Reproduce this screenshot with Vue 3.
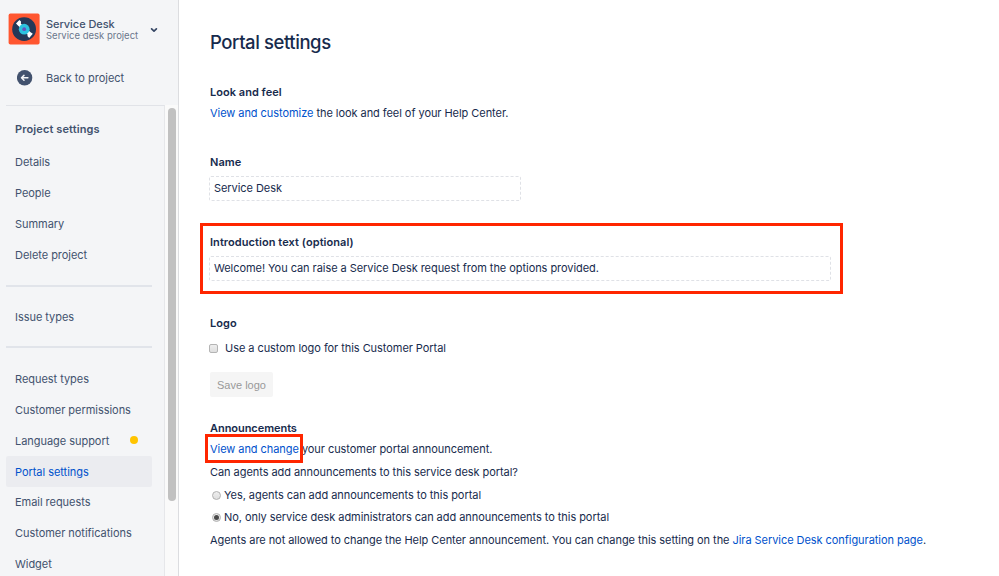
<script setup>
import { ref } from "vue";

const active = ref("Portal settings");
const name = ref("Service Desk");
const intro = ref("Welcome! You can raise a Service Desk request from the options provided.");
const customLogo = ref(false);
const agentsCanAdd = ref("no");

const groups = [
  [
    { label: "Details" },
    { label: "People" },
    { label: "Summary" },
    { label: "Delete project" }
  ],
  [{ label: "Issue types" }],
  [
    { label: "Request types" },
    { label: "Customer permissions" },
    { label: "Language support", dot: true },
    { label: "Portal settings" },
    { label: "Email requests" },
    { label: "Customer notifications" },
    { label: "Widget" }
  ]
];
</script>

<template>
  <div class="page">
    <aside class="sidebar">
      <div class="project">
        <svg class="avatar" viewBox="0 0 32 32">
          <rect x="0.6" y="0.6" width="31" height="31" rx="1.8" fill="#ff5630" />
          <circle cx="16.1" cy="16.2" r="11.9" fill="#253858" />
          <path d="M8 10.4 11.4 7 13 8.6 12.9 10.8 16 13.5 22.6 19.2 24.8 20.8 21.2 24.9 19.6 23.2 19.4 21.2 16 18 10.2 12.8Z" fill="#fff" />
          <circle cx="16.2" cy="16.2" r="5.4" fill="#2cc3e0" />
          <circle cx="16.2" cy="16.2" r="1.9" fill="#6554c0" />
        </svg>
        <div class="project-text">
          <div class="project-name">Service Desk</div>
          <div class="project-type">Service desk project</div>
        </div>
        <svg class="chevron" viewBox="0 0 8 6">
          <path d="M1.6 1.8 4 4.1 6.4 1.8" fill="none" stroke="#344563" stroke-width="1.7" stroke-linecap="round" stroke-linejoin="round" />
        </svg>
      </div>
      <div class="back">
        <svg class="back-icon" viewBox="0 0 16 16">
          <circle cx="7.6" cy="7.8" r="7.7" fill="#42526e" />
          <path d="M10.9 7.8H4.8M7 5.4 4.5 7.8 7 10.2" fill="none" stroke="#f4f5f7" stroke-width="1.5" stroke-linecap="round" stroke-linejoin="round" />
        </svg>
        <span>Back to project</span>
      </div>
      <div class="scroller">
        <nav class="nav">
          <div class="nav-title">Project settings</div>
          <div v-for="(group, i) in groups" :key="i" class="group">
            <div
              v-for="item in group"
              :key="item.label"
              class="item"
              :class="{ active: item.label === active }"
              @click="active = item.label"
            >
              <span>{{ item.label }}</span>
              <i v-if="item.dot" class="dot"></i>
            </div>
          </div>
        </nav>
        <div class="track"><div class="thumb"></div></div>
      </div>
    </aside>

    <main class="main">
      <h1>Portal settings</h1>

      <section class="look">
        <h2>Look and feel</h2>
        <p><a>View and customize</a> the look and feel of your Help Center.</p>
      </section>

      <section class="name">
        <h2>Name</h2>
        <div class="field short">{{ name }}</div>
      </section>

      <section class="intro">
        <h2>Introduction text (optional)</h2>
        <div class="field">{{ intro }}</div>
      </section>

      <section class="logo">
        <h2>Logo</h2>
        <label class="check">
          <span class="box" :class="{ on: customLogo }" @click="customLogo = !customLogo"></span>
          Use a custom logo for this Customer Portal
        </label>
        <button class="save" disabled>Save logo</button>
      </section>

      <section class="announcements">
        <h2>Announcements</h2>
        <p><a class="marked">View and change</a> your customer portal announcement.</p>
        <p class="question">Can agents add announcements to this service desk portal?</p>
        <label class="radio" @click="agentsCanAdd = 'yes'">
          <span class="circle" :class="{ on: agentsCanAdd === 'yes' }"></span>
          Yes, agents can add announcements to this portal
        </label>
        <label class="radio" @click="agentsCanAdd = 'no'">
          <span class="circle" :class="{ on: agentsCanAdd === 'no' }"></span>
          No, only service desk administrators can add announcements to this portal
        </label>
        <p class="note">
          Agents are not allowed to change the Help Center announcement. You can change this setting on the
          <a>Jira Service Desk configuration page</a>.
        </p>
      </section>
    </main>
  </div>
</template>

<style>
body {
  margin: 0;
  overflow: hidden;
}
</style>

<style scoped>
* {
  box-sizing: border-box;
}

.page {
  display: flex;
  height: 576px;
  overflow: hidden;
  background: #fff;
  color: #172b4d;
  font-family: Inter, "Liberation Sans", sans-serif;
  font-size: 11px;
  line-height: 16px;
  white-space: nowrap;
}

.sidebar {
  display: flex;
  flex-direction: column;
  flex: none;
  width: 179px;
  background: #f4f5f7;
  border-right: 1px solid #dcdde0;
  color: #42526e;
}

.project {
  display: flex;
  align-items: center;
  flex: none;
  height: 58px;
  padding-left: 8px;
}

.avatar {
  width: 32px;
  height: 32px;
}

.project-text {
  width: 104px;
  margin-left: 6px;
}

.project-name {
  font-weight: 500;
  line-height: 12px;
  letter-spacing: -0.05px;
}

.project-type {
  font-size: 9.5px;
  line-height: 11px;
  color: #6b778c;
}

.chevron {
  width: 8px;
  height: 6px;
  margin-top: 2px;
}

.back {
  display: flex;
  align-items: center;
  flex: none;
  height: 47px;
  padding: 0 0 8px 17px;
}

.back-icon {
  width: 16px;
  height: 16px;
  margin-right: 13px;
}

.scroller {
  display: flex;
  flex: 1;
  min-height: 0;
  overflow: hidden;
}

.nav {
  width: 159px;
  margin-left: 6px;
  padding-right: 12px;
  border-top: 1px solid #e1e3e8;
  border-right: 1px solid #e6e7ea;
  letter-spacing: -0.04px;
}

.nav-title {
  height: 41px;
  padding: 15px 0 0 9px;
  font-weight: 600;
  letter-spacing: 0.12px;
}

.group + .group {
  margin-top: 14px;
  padding-top: 15px;
  border-top: 2px solid #e1e4ea;
}

.item {
  display: flex;
  align-items: center;
  height: 30.9px;
  padding-left: 9px;
  border-radius: 2px;
}

.item.active {
  background: #ebecf0;
  color: #0052cc;
}

.dot {
  width: 8px;
  height: 8px;
  margin: -1px 0 0 21px;
  border-radius: 50%;
  background: #ffc400;
}

.track {
  flex: 1;
  padding: 3px 2px 0 3px;
  background: #fafafa;
}

.thumb {
  height: 393px;
  border-radius: 4px;
  background: #c1c1c1;
}

.main {
  flex: 1;
  padding: 28px 0 0 31px;
  letter-spacing: -0.055px;
}

h1,
h2,
p {
  margin: 0;
}

h1 {
  font-size: 18.5px;
  font-weight: 500;
  line-height: 28px;
  letter-spacing: -0.42px;
}

h2 {
  font-size: 11px;
  font-weight: 600;
  line-height: 16px;
  letter-spacing: 0.03px;
}

a {
  color: #0052cc;
}

.look {
  height: 70px;
  margin-top: 28px;
}

.look p {
  margin-top: 5px;
}

.name {
  height: 69px;
}

.field {
  height: 25px;
  margin: 6px 0 0 -1px;
  padding: 3px 4px;
  border: 1px dashed #dfe1e6;
  border-radius: 2px;
}

.short {
  width: 312px;
}

.intro {
  width: 643px;
  height: 71px;
  margin-left: -10px;
  padding: 8px 9px 0 7px;
  border: 3px solid #ff2600;
}

.intro h2 {
  letter-spacing: 0.07px;
}

.logo {
  margin-top: 21px;
}

.check {
  display: flex;
  align-items: center;
  gap: 7px;
  margin: 9px 0 0 -1px;
}

.box {
  width: 9px;
  height: 9px;
  border: 1px solid #b4b4b4;
  border-radius: 2px;
  background: linear-gradient(#eee, #dedede);
}

.box.on {
  background: #0052cc;
}

.save {
  display: block;
  width: 63px;
  height: 25px;
  margin-top: 16px;
  padding: 0;
  border: 0;
  border-radius: 2px;
  background: #f5f5f5;
  color: #999;
  font-family: "Liberation Sans", sans-serif;
  font-size: 11px;
}

.announcements {
  margin-top: 23px;
}

.announcements h2 {
  letter-spacing: -0.05px;
}

.announcements p {
  margin-top: 5px;
}

.marked {
  position: relative;
}

.marked::after {
  content: "";
  position: absolute;
  top: -8px;
  left: -5px;
  box-sizing: border-box;
  width: 98px;
  height: 29px;
  border: 3px solid #ff2600;
}

.announcements .question {
  margin: 7px 0 4px;
}

.radio {
  display: flex;
  align-items: center;
  height: 22px;
  padding-left: 2px;
  gap: 3px;
}

.circle {
  display: flex;
  width: 9px;
  height: 9px;
  border: 1px solid #b0b0b0;
  border-radius: 50%;
  background: linear-gradient(#eee, #dedede);
}

.circle.on::after {
  content: "";
  width: 5px;
  height: 5px;
  margin: 1px;
  border-radius: 50%;
  background: #4a4a4a;
}

.announcements .note {
  margin-top: 4px;
}
</style>
